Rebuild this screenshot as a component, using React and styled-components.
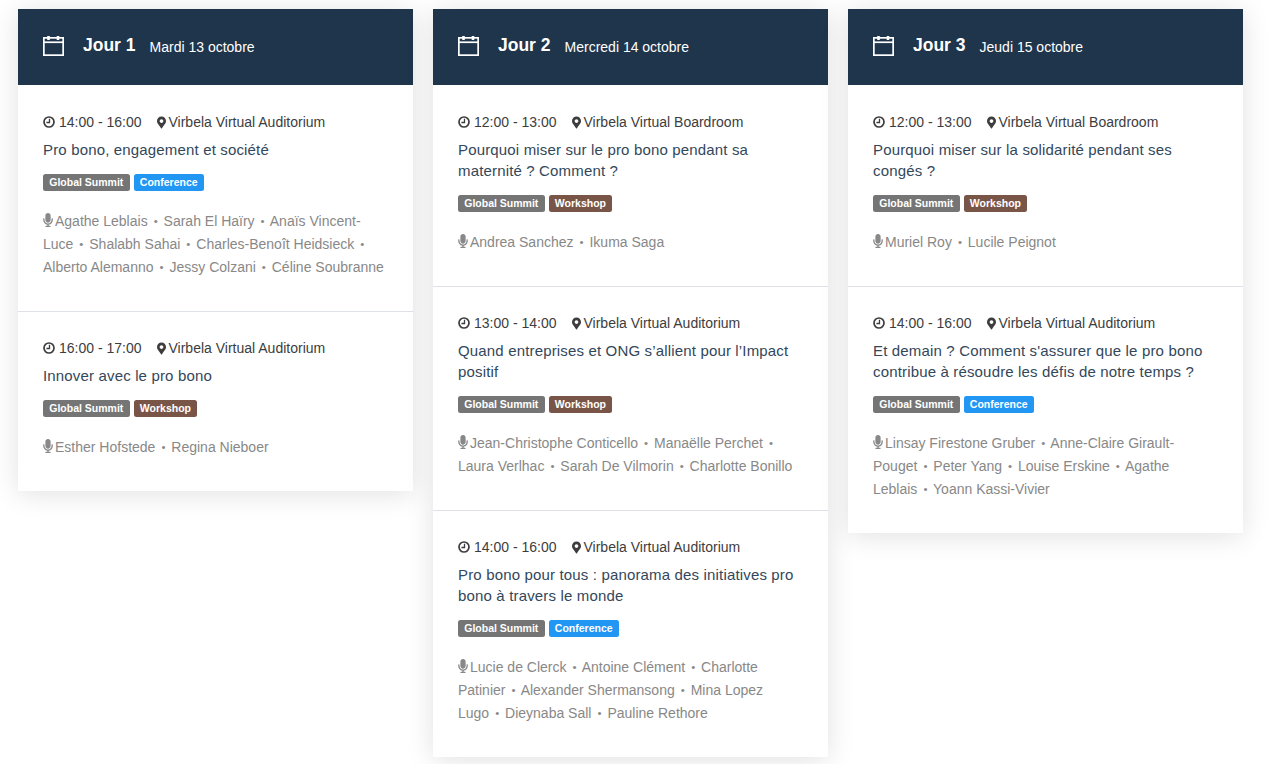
import React from 'react';
import styled, { createGlobalStyle } from 'styled-components';
import { FaMapMarkerAlt, FaMicrophone } from 'react-icons/fa';

const GlobalStyle = createGlobalStyle`
  html, body {
    margin: 0;
    padding: 0;
    background: #fff;
  }
  body {
    font-family: 'Liberation Sans', Arial, sans-serif;
  }
`;

const days = [
  {
    label: 'Jour 1',
    date: 'Mardi 13 octobre',
    sessions: [
      {
        time: '14:00 - 16:00',
        place: 'Virbela Virtual Auditorium',
        title: 'Pro bono, engagement et société',
        kind: 'Conference',
        speakers: ['Agathe Leblais', 'Sarah El Haïry', 'Anaïs Vincent-Luce', 'Shalabh Sahai', 'Charles-Benoît Heidsieck', 'Alberto Alemanno', 'Jessy Colzani', 'Céline Soubranne'],
      },
      {
        time: '16:00 - 17:00',
        place: 'Virbela Virtual Auditorium',
        title: 'Innover avec le pro bono',
        kind: 'Workshop',
        speakers: ['Esther Hofstede', 'Regina Nieboer'],
      },
    ],
  },
  {
    label: 'Jour 2',
    date: 'Mercredi 14 octobre',
    sessions: [
      {
        time: '12:00 - 13:00',
        place: 'Virbela Virtual Boardroom',
        title: 'Pourquoi miser sur le pro bono pendant sa maternité ? Comment ?',
        kind: 'Workshop',
        speakers: ['Andrea Sanchez', 'Ikuma Saga'],
      },
      {
        time: '13:00 - 14:00',
        place: 'Virbela Virtual Auditorium',
        title: 'Quand entreprises et ONG s’allient pour l’Impact positif',
        kind: 'Workshop',
        speakers: ['Jean-Christophe Conticello', 'Manaëlle Perchet', 'Laura Verlhac', 'Sarah De Vilmorin', 'Charlotte Bonillo'],
      },
      {
        time: '14:00 - 16:00',
        place: 'Virbela Virtual Auditorium',
        title: 'Pro bono pour tous : panorama des initiatives pro bono à travers le monde',
        kind: 'Conference',
        speakers: ['Lucie de Clerck', 'Antoine Clément', 'Charlotte Patinier', 'Alexander Shermansong', 'Mina Lopez Lugo', 'Dieynaba Sall', 'Pauline Rethore'],
      },
    ],
  },
  {
    label: 'Jour 3',
    date: 'Jeudi 15 octobre',
    sessions: [
      {
        time: '12:00 - 13:00',
        place: 'Virbela Virtual Boardroom',
        title: 'Pourquoi miser sur la solidarité pendant ses congés ?',
        kind: 'Workshop',
        speakers: ['Muriel Roy', 'Lucile Peignot'],
      },
      {
        time: '14:00 - 16:00',
        place: 'Virbela Virtual Auditorium',
        title: 'Et demain ? Comment s\'assurer que le pro bono contribue à résoudre les défis de notre temps ?',
        kind: 'Conference',
        speakers: ['Linsay Firestone Gruber', 'Anne-Claire Girault-Pouget', 'Peter Yang', 'Louise Erskine', 'Agathe Leblais', 'Yoann Kassi-Vivier'],
      },
    ],
  },
];

const Page = styled.div`
  display: flex;
  align-items: flex-start;
  gap: 20px;
  padding: 9px 0 7px 18px;
`;

const Day = styled.section`
  width: 395px;
  background: #fff;
  box-shadow: 0 3px 26px rgba(0, 0, 0, 0.12);
`;

const DayHeader = styled.header`
  display: flex;
  align-items: center;
  height: 73px;
  padding: 0 0 3px 25px;
  color: #fff;
  background: #1f354b;
`;

const CalendarIcon = styled.svg`
  width: 21px;
  height: 20px;
  margin-right: 19px;
  flex: none;
`;

const DayLabel = styled.span`
  font-size: 17.5px;
  font-weight: 700;
  margin-right: 14px;
`;

const DayDate = styled.span`
  font-size: 14px;
  padding-top: 2px;
`;

const Session = styled.article`
  padding: 26px 25px 32px;
  border-top: 1px solid #dee2e6;

  &:first-of-type {
    border-top: 0;
    padding-top: 27px;
  }
`;

const Meta = styled.div`
  display: flex;
  align-items: center;
  font-size: 14px;
  line-height: 20px;
  color: #3d3d3d;
`;

const MetaItem = styled.span`
  display: inline-flex;
  align-items: center;
  gap: 4px;
  margin-right: 15px;
`;

const ClockIcon = styled.svg`
  width: 12px;
  height: 12px;
  flex: none;
`;

const Marker = styled(FaMapMarkerAlt)`
  width: 9px;
  height: 13px;
  margin-right: -1px;
  flex: none;
`;

const Title = styled.h3`
  margin: 7px 0 0;
  font-size: 15px;
  font-weight: 400;
  line-height: 21px;
  letter-spacing: 0.16px;
  color: #33475a;
`;

const Tags = styled.div`
  display: flex;
  gap: 4px;
  margin-top: 14px;
`;

const Tag = styled.span`
  padding: 0 6.25px;
  height: 17px;
  border-radius: 2.5px;
  font-size: 10.5px;
  font-weight: 700;
  line-height: 17px;
  color: #fff;
  background: ${(props) => props.$bg};
`;

const Speakers = styled.p`
  margin: 19px 0 0;
  font-size: 14px;
  line-height: 23px;
  color: #888;
`;

const Mic = styled(FaMicrophone)`
  width: 10px;
  height: 14px;
  vertical-align: -1px;
  margin-right: 2px;
`;

const Bullet = styled.span`
  margin: 0 2px 0 6px;
  font-size: 11.5px;
  line-height: 1;
  vertical-align: 1px;
`;

const tagColors = {
  'Global Summit': '#757575',
  Conference: '#2196f3',
  Workshop: '#795548',
};

const Calendar = () => (
  <CalendarIcon viewBox="0 0 21 20" fill="none" stroke="#fff">
    <rect x="0.85" y="1.85" width="19.3" height="17.3" strokeWidth="1.7" />
    <path d="M0.85 6.25h19.3" strokeWidth="1.7" />
    <path d="M5.5 0v4M15 0v4" strokeWidth="2.6" />
  </CalendarIcon>
);

const Clock = () => (
  <ClockIcon viewBox="0 0 12 12" fill="none" stroke="currentColor">
    <circle cx="6" cy="6" r="5" strokeWidth="1.7" />
    <path d="M6.5 2.8v3.7H3.4" strokeWidth="1.3" />
  </ClockIcon>
);

const App = () => (
  <>
    <GlobalStyle />
    <Page>
      {days.map((day) => (
        <Day key={day.label}>
          <DayHeader>
            <Calendar />
            <DayLabel>{day.label}</DayLabel>
            <DayDate>{day.date}</DayDate>
          </DayHeader>
          {day.sessions.map((session) => (
            <Session key={session.time}>
              <Meta>
                <MetaItem><Clock />{session.time}</MetaItem>
                <MetaItem><Marker />{session.place}</MetaItem>
              </Meta>
              <Title>{session.title}</Title>
              <Tags>
                <Tag $bg={tagColors['Global Summit']}>Global Summit</Tag>
                <Tag $bg={tagColors[session.kind]}>{session.kind}</Tag>
              </Tags>
              <Speakers>
                <Mic />
                {session.speakers.map((name, i) => (
                  <React.Fragment key={name}>
                    {i > 0 && <><Bullet>•</Bullet> </>}
                    {name}
                  </React.Fragment>
                ))}
              </Speakers>
            </Session>
          ))}
        </Day>
      ))}
    </Page>
  </>
);

export default App;
